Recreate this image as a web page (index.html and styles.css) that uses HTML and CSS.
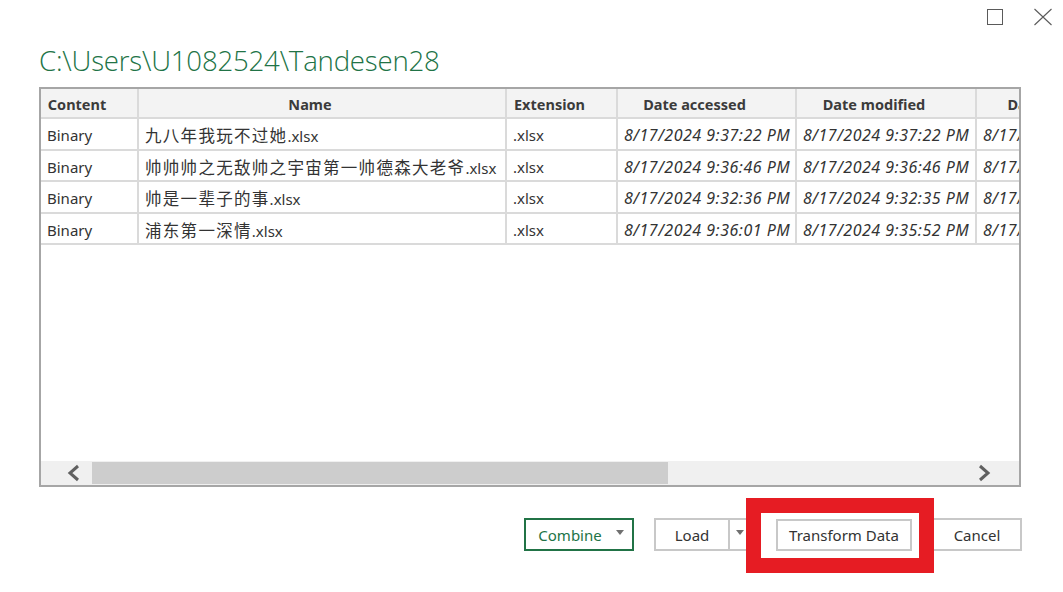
FILE: index.html
```html
<!DOCTYPE html>
<html lang="en">
<head>
<meta charset="utf-8">
<title>Navigator</title>
<link rel="stylesheet" href="styles.css">
</head>
<body>
<div class="dialog">
  <div class="titlebar">
    <button class="winbtn" aria-label="Maximize">
      <svg width="18" height="18" viewBox="0 0 18 18"><rect x="1.5" y="1.5" width="15" height="15" fill="none" stroke="#5a5a5a" stroke-width="1"/></svg>
    </button>
    <button class="winbtn" aria-label="Close">
      <svg width="20" height="18" viewBox="0 0 20 18"><path d="M1.5 1 L18.5 17 M18.5 1 L1.5 17" stroke="#5a5a5a" stroke-width="1.1" fill="none"/></svg>
    </button>
  </div>

  <h1 class="path">C:\Users\U1082524\Tandesen28</h1>

  <div class="grid">
    <div class="grid-body">
      <table class="data">
        <colgroup>
          <col class="c-content"><col class="c-name"><col class="c-ext"><col class="c-date"><col class="c-date2"><col class="c-date2">
        </colgroup>
        <thead>
          <tr><th>Content</th><th>Name</th><th>Extension</th><th>Date accessed</th><th>Date modified</th><th>Date created</th></tr>
        </thead>
        <tbody>
          <tr><td>Binary</td><td><span class="cjk">九八年我玩不过她</span>.xlsx</td><td>.xlsx</td><td class="dt">8/17/2024 9:37:22 PM</td><td class="dt">8/17/2024 9:37:22 PM</td><td class="dt">8/17/2024 9:37:22 PM</td></tr>
          <tr><td>Binary</td><td><span class="cjk">帅帅帅之无敌帅之宇宙第一帅德森大老爷</span>.xlsx</td><td>.xlsx</td><td class="dt">8/17/2024 9:36:46 PM</td><td class="dt">8/17/2024 9:36:46 PM</td><td class="dt">8/17/2024 9:36:46 PM</td></tr>
          <tr><td>Binary</td><td><span class="cjk">帅是一辈子的事</span>.xlsx</td><td>.xlsx</td><td class="dt">8/17/2024 9:32:36 PM</td><td class="dt">8/17/2024 9:32:35 PM</td><td class="dt">8/17/2024 9:32:35 PM</td></tr>
          <tr><td>Binary</td><td><span class="cjk">浦东第一深情</span>.xlsx</td><td>.xlsx</td><td class="dt">8/17/2024 9:36:01 PM</td><td class="dt">8/17/2024 9:35:52 PM</td><td class="dt">8/17/2024 9:35:52 PM</td></tr>
        </tbody>
      </table>
    </div>
    <div class="hscroll">
      <div class="arrow arrow-left">
        <svg width="16" height="18" viewBox="0 0 16 18"><polyline points="12,2 4,9 12,16" fill="none" stroke="#606060" stroke-width="3"/></svg>
      </div>
      <div class="thumb"></div>
      <div class="track"></div>
      <div class="arrow arrow-right">
        <svg width="16" height="18" viewBox="0 0 16 18"><polyline points="4,2 12,9 4,16" fill="none" stroke="#606060" stroke-width="3"/></svg>
      </div>
    </div>
  </div>

  <div class="actions">
    <button class="btn btn-combine">Combine <span class="caret"></span></button>
    <div class="split">
      <button class="btn split-main">Load</button>
      <button class="btn split-drop"><span class="caret"></span></button>
    </div>
    <div class="highlight">
      <button class="btn btn-transform">Transform Data</button>
    </div>
    <button class="btn btn-cancel">Cancel</button>
  </div>
</div>
</body>
</html>
```

FILE: styles.css
```css
* { box-sizing: border-box; }

html, body {
  margin: 0;
  padding: 0;
  background: #ffffff;
}

body {
  width: 1063px;
  height: 592px;
  overflow: hidden;
  font-family: "Segoe UI", "Noto Sans", "Noto Sans CJK SC", sans-serif;
  color: #333333;
}

.dialog {
  display: flex;
  flex-direction: column;
  height: 592px;
}

.titlebar {
  display: flex;
  justify-content: flex-end;
  gap: 28px;
  height: 34px;
  padding: 8px 10px 0 0;
}

.winbtn {
  border: 0;
  background: transparent;
  padding: 0;
  width: 20px;
  height: 18px;
  display: flex;
  align-items: flex-start;
  justify-content: center;
}

.path {
  margin: 7px 0 0 39px;
  font-family: "Open Sans", sans-serif;
  font-weight: 300;
  font-size: 27.6px;
  line-height: 38px;
  height: 46px;
  color: #217346;
  letter-spacing: -0.2px;
}

.grid {
  margin-left: 39px;
  width: 982px;
  height: 400px;
  border: 2px solid #a6a6a6;
  display: flex;
  flex-direction: column;
  overflow: hidden;
}

.grid-body {
  flex: 1;
  overflow: hidden;
}

.data {
  table-layout: fixed;
  border-collapse: separate;
  border-spacing: 0;
  width: 1116px;
  font-size: 15px;
}

.c-content { width: 98px; }
.c-name { width: 368px; }
.c-ext { width: 111px; }
.c-date { width: 179px; }
.c-date2 { width: 180px; }

.data th, .data td {
  border-right: 2px solid #dadada;
  border-bottom: 2px solid #dadada;
  white-space: nowrap;
  overflow: hidden;
}

.data th {
  height: 30px;
  background: #f3f3f3;
  font-weight: 700;
  color: #3b3b3b;
  text-align: center;
  padding: 1px 24px 0 0;
  font-size: 14.5px;
}

.data td {
  height: 31.5px;
  padding: 3px 0 0 6px;
  color: #333333;
  font-size: 15px;
}

.data .cjk {
  font-family: "Noto Sans CJK SC", sans-serif;
  font-size: 16.5px;
  letter-spacing: 1.3px;
  color: #333333;
}

.data td.dt {
  font-style: italic;
  font-size: 16px;
  letter-spacing: 0.5px;
}

.hscroll {
  height: 24px;
  display: flex;
  background: #f0f0f0;
}

.hscroll .arrow {
  display: flex;
  align-items: center;
}

.arrow-left {
  width: 51px;
  padding-left: 25px;
}

.arrow-right {
  width: 62px;
  padding-left: 19px;
}

.thumb {
  width: 576px;
  margin: 1px 0;
  background: #cdcdcd;
}

.track { flex: 1; }

.actions {
  display: flex;
  justify-content: flex-end;
  align-items: center;
  margin-top: 31px;
  padding-right: 41px;
}

.btn {
  font-family: "Segoe UI", "Noto Sans", sans-serif;
  font-size: 15px;
  color: #333333;
  background: #ffffff;
  border: 2px solid #c8c8c8;
  height: 33px;
  padding: 0;
  display: flex;
  align-items: center;
  justify-content: center;
}

.caret {
  display: inline-block;
  width: 0;
  height: 0;
  border-left: 4.5px solid transparent;
  border-right: 4.5px solid transparent;
  border-top: 5px solid #707070;
}

.btn-combine {
  width: 110px;
  border-color: #217346;
  color: #217346;
  gap: 14px;
  padding-left: 4px;
}

.btn-combine .caret { margin-top: -5px; }

.split {
  display: flex;
  margin-left: 20px;
}

.split-main {
  width: 75px;
  border-right-width: 1px;
}

.split-drop {
  width: 23px;
  border-left-width: 1px;
}

.split-drop .caret { margin-top: -5px; }

.highlight {
  position: relative;
  margin-left: 24px;
}

.highlight::after {
  content: "";
  position: absolute;
  left: -30px;
  right: -22px;
  top: -21px;
  bottom: -22px;
  border: 15px solid #e61c23;
  pointer-events: none;
}

.btn-transform {
  width: 136px;
  height: 32px;
}

.btn-cancel {
  width: 90px;
  margin-left: 20px;
}
```
